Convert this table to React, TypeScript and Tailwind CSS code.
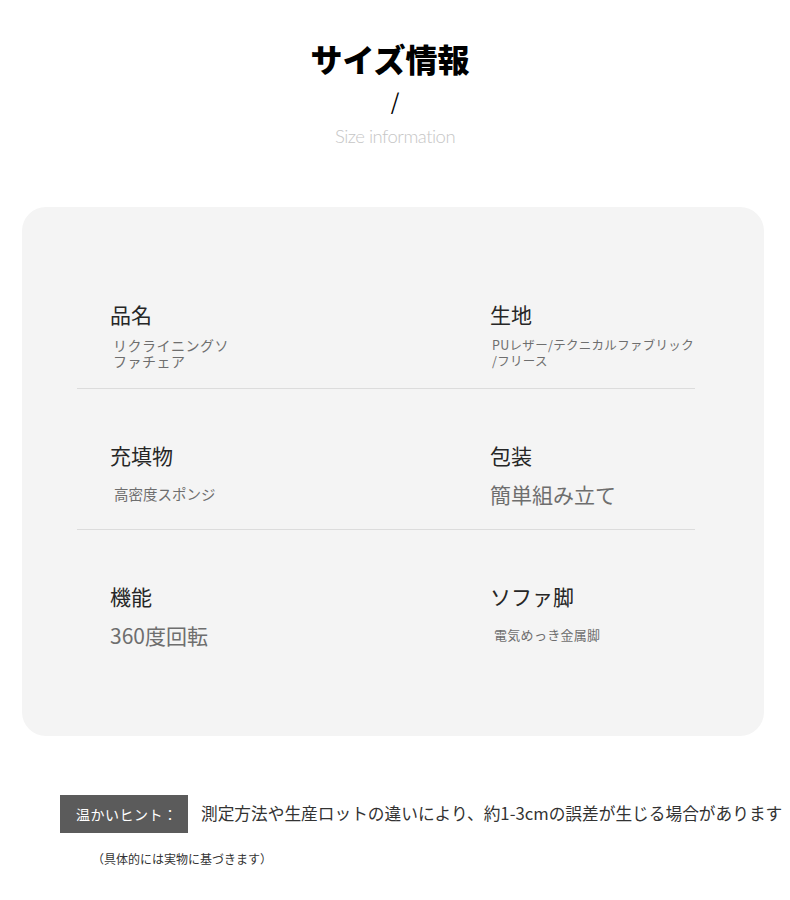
const jp = { fontFamily: '"Noto Sans CJK JP", "Noto Sans", sans-serif' };

type Item = { label: string; value: string; valueClass: string };

const rows: [Item, Item][] = [
  [
    { label: '品名', value: 'リクライニングソ\nファチェア', valueClass: 'text-[14px] leading-[16px] tracking-[0.5px] pl-[3px]' },
    { label: '生地', value: 'PUレザー/テクニカルファブリック\n/フリース', valueClass: 'text-[12.5px] leading-[16px] tracking-[0.3px] pl-[2px]' },
  ],
  [
    { label: '充填物', value: '高密度スポンジ', valueClass: 'text-[14.5px] leading-[20px] pl-[4px]' },
    { label: '包装', value: '簡単組み立て', valueClass: 'text-[21px] leading-[30px]' },
  ],
  [
    { label: '機能', value: '360度回転', valueClass: 'text-[21px] leading-[30px]' },
    { label: 'ソファ脚', value: '電気めっき金属脚', valueClass: 'text-[13px] leading-[18px] pl-[4px] tracking-[0.3px]' },
  ],
];

function Cell({ item }: { item: Item }) {
  return (
    <div className="flex flex-col">
      <div className="text-[21px] leading-[32px] text-[#262626]">{item.label}</div>
      <div className={`mt-[7px] min-h-[32px] flex items-center text-[#6e6e6e] whitespace-pre-line ${item.valueClass}`}>
        <span>{item.value}</span>
      </div>
    </div>
  );
}

export default function App() {
  return (
    <div className="w-[790px] h-[900px] bg-white overflow-hidden" style={jp}>
      {/* Header */}
      <div className="flex flex-col items-center pt-[36px]">
        <h1 className="text-[32px] leading-[44px] font-black text-black ml-[-10px]">サイズ情報</h1>
        <div className="text-[22px] leading-[26px] text-black mt-[7px]">/</div>
        <div
          className="text-[18.5px] leading-[24px] text-[#c6c6c6] font-light tracking-[-0.5px] mt-[11px]"
          style={{ fontFamily: 'Lato, "Noto Sans", sans-serif' }}
        >
          Size information
        </div>
      </div>

      {/* Spec card */}
      <div className="ml-[22px] mt-[59px] w-[742px] h-[529px] rounded-[24px] bg-[#f4f4f4] pt-[41px] pl-[55px]">
        <div className="w-[618px]">
          {rows.map((pair, i) => (
            <div
              key={i}
              className={`grid grid-cols-[380px_1fr] pl-[33px] pt-[50px] pb-[19px] ${
                i < rows.length - 1 ? 'border-b border-[#dcdcdc]' : ''
              }`}
            >
              <Cell item={pair[0]} />
              <Cell item={pair[1]} />
            </div>
          ))}
        </div>
      </div>

      {/* Hint */}
      <div className="mt-[59px] flex items-center pl-[60px] whitespace-nowrap">
        <div className="w-[128px] shrink-0 h-[38px] bg-[#5b5b5b] flex items-center pl-[16px] text-[14px] text-white tracking-[0.5px]">
          温かいヒント：
        </div>
        <div className="ml-[13px] text-[16.7px] text-[#333333]">
          測定方法や生産ロットの違いにより、約1-3cmの誤差が生じる場合があります
        </div>
      </div>
      <div className="pl-[92px] mt-[17px] text-[12px] text-[#333333]">（具体的には実物に基づきます）</div>
    </div>
  );
}
